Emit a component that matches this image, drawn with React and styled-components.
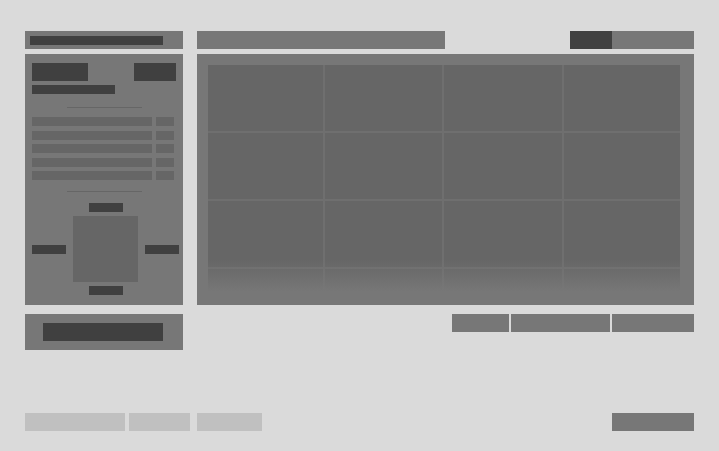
import React from "react";
import styled, { createGlobalStyle } from "styled-components";

const GlobalStyle = createGlobalStyle`
  html, body {
    margin: 0;
    padding: 0;
    background: #dadada;
    font-family: "Liberation Sans", Arial, sans-serif;
  }
`;

const Page = styled.div`
  width: 719px;
  height: 451px;
  box-sizing: border-box;
  padding: 31px 25px 20px 25px;
  display: flex;
  flex-direction: column;
`;

const Columns = styled.div`
  display: flex;
  gap: 14px;
`;

const Sidebar = styled.div`
  width: 158px;
  display: flex;
  flex-direction: column;
`;

const Main = styled.div`
  flex: 1;
  display: flex;
  flex-direction: column;
`;

const Block = styled.div`
  background: ${(p) => p.$color || "#404040"};
  width: ${(p) => p.$w}px;
  height: ${(p) => p.$h || 9}px;
  flex-shrink: 0;
`;

const TitleBar = styled.div`
  height: 18px;
  background: #777;
  display: flex;
  align-items: center;
  padding-left: 5px;
`;

const SidePanel = styled.div`
  margin-top: 5px;
  height: 251px;
  background: #777;
  box-sizing: border-box;
  padding: 9px 7px 0 7px;
  display: flex;
  flex-direction: column;
`;

const HeadRow = styled.div`
  display: flex;
  justify-content: space-between;
`;

const Subtitle = styled(Block)`
  margin-top: 4px;
`;

const Divider = styled.div`
  width: 75px;
  height: 1px;
  background: #666;
  align-self: center;
  margin: ${(p) => p.$m};
`;

const Rows = styled.div`
  display: flex;
  flex-direction: column;
  gap: 4.5px;
`;

const DataRow = styled.div`
  display: flex;
  gap: 4px;
`;

const Dpad = styled.div`
  margin-top: 11px;
  display: grid;
  grid-template-columns: 34px 65px 34px;
  grid-template-rows: 9px 66px 9px;
  column-gap: 7px;
  row-gap: 4px;
  justify-content: start;
  align-items: center;
  justify-items: center;
`;

const Pad = styled.div`
  grid-column: 2;
  grid-row: 2;
  width: 65px;
  height: 66px;
  background: #666;
`;

const Cell = styled.div`
  grid-column: ${(p) => p.$c};
  grid-row: ${(p) => p.$r};
  width: 34px;
  height: 9px;
  background: #404040;
`;

const ActionCard = styled.div`
  margin-top: 9px;
  height: 36px;
  background: #777;
  display: flex;
  align-items: center;
  padding-left: 18px;
`;

const TopRow = styled.div`
  display: flex;
  justify-content: space-between;
  height: 18px;
`;

const Tabs = styled.div`
  display: flex;
`;

const Tab = styled.div`
  width: ${(p) => p.$w}px;
  background: ${(p) => (p.$active ? "#404040" : "#777")};
`;

const Viewport = styled.div`
  margin-top: 5px;
  height: 251px;
  background: #777;
  box-sizing: border-box;
  padding: 11px 14px 13px 11px;
`;

const GridClip = styled.div`
  position: relative;
  height: 227px;
  overflow: hidden;
`;

const Grid = styled.div`
  display: grid;
  grid-template-columns: 115px 117px 118px 116px;
  grid-auto-rows: 66px;
  gap: 2px 2px;
  background: #6f6f6f;
`;

const Tile = styled.div`
  background: #666;
`;

const Fade = styled.div`
  position: absolute;
  left: 0;
  right: 0;
  bottom: 0;
  height: 32px;
  background: linear-gradient(to bottom, rgba(119, 119, 119, 0), #777);
`;

const ButtonRow = styled.div`
  margin-top: 9px;
  display: flex;
  justify-content: flex-end;
  gap: 2px;
`;

const Btn = styled.div`
  width: ${(p) => p.$w}px;
  height: 18px;
  background: ${(p) => p.$color || "#777"};
  margin-left: ${(p) => p.$ml || 0}px;
`;

const Footer = styled.div`
  margin-top: auto;
  display: flex;
  align-items: center;
`;

const FooterLinks = styled.div`
  display: flex;
  gap: 4px;
`;

const Spacer = styled.div`
  flex: 1;
`;

export default function App() {
  const tiles = Array.from({ length: 16 });
  return (
    <>
      <GlobalStyle />
      <Page>
        <Columns>
          <Sidebar>
            <TitleBar>
              <Block $w={133} />
            </TitleBar>
            <SidePanel>
              <HeadRow>
                <Block $w={56} $h={18} />
                <Block $w={42} $h={18} />
              </HeadRow>
              <Subtitle $w={83} />
              <Divider $m="13px 0 9px" />
              <Rows>
                {[0, 1, 2, 3, 4].map((i) => (
                  <DataRow key={i}>
                    <Block $w={120} $color="#666" />
                    <Block $w={18} $color="#666" />
                  </DataRow>
                ))}
              </Rows>
              <Divider $m="11px 0 0" />
              <Dpad>
                <Cell $c={2} $r={1} />
                <Cell $c={1} $r={2} />
                <Pad />
                <Cell $c={3} $r={2} />
                <Cell $c={2} $r={3} />
              </Dpad>
            </SidePanel>
            <ActionCard>
              <Block $w={120} $h={18} />
            </ActionCard>
          </Sidebar>
          <Main>
            <TopRow>
              <Block $w={248} $h={18} $color="#777" />
              <Tabs>
                <Tab $w={42} $active />
                <Tab $w={82} />
              </Tabs>
            </TopRow>
            <Viewport>
              <GridClip>
                <Grid>
                  {tiles.map((_, i) => (
                    <Tile key={i} />
                  ))}
                </Grid>
                <Fade />
              </GridClip>
            </Viewport>
            <ButtonRow>
              <Btn $w={57} />
              <Btn $w={99} />
              <Btn $w={82} />
            </ButtonRow>
          </Main>
        </Columns>
        <Footer>
          <FooterLinks>
            <Btn $w={100} $color="#c0c0c0" />
            <Btn $w={61} $color="#c0c0c0" />
            <Btn $w={65} $color="#c0c0c0" $ml={3} />
          </FooterLinks>
          <Spacer />
          <Btn $w={82} />
        </Footer>
      </Page>
    </>
  );
}
